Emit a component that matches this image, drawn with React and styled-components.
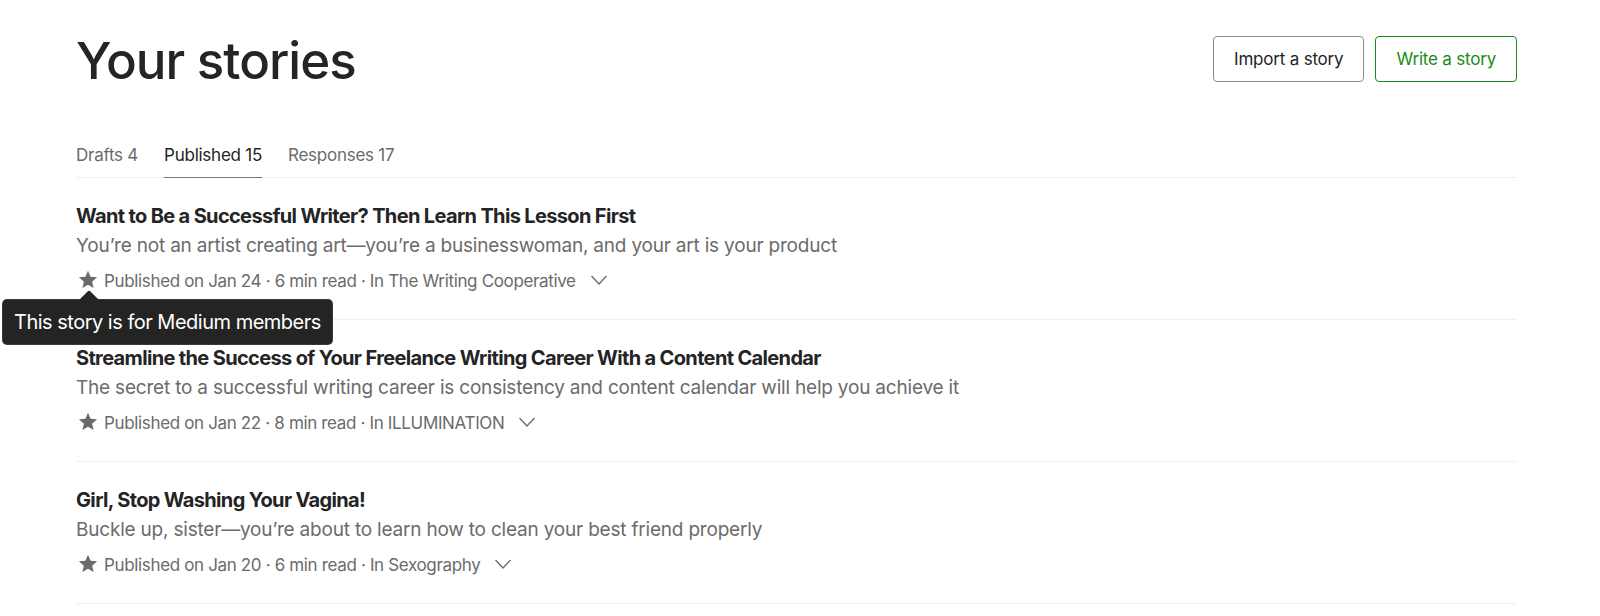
import React from "react";
import styled, { createGlobalStyle } from "styled-components";

const GlobalStyle = createGlobalStyle`
  * { box-sizing: border-box; }
  body {
    margin: 0;
    background: #fff;
    font-family: Inter, "Noto Sans", "Liberation Sans", sans-serif;
    color: #242424;
    -webkit-font-smoothing: antialiased;
  }
`;

const Page = styled.main`
  width: 1441px;
  margin-left: 76px;
  padding-top: 36px;
`;

const Header = styled.header`
  display: flex;
  justify-content: space-between;
  align-items: center;
  height: 46px;
`;

const PageTitle = styled.h1`
  margin: 0;
  font-size: 51px;
  line-height: 46px;
  font-weight: 500;
  letter-spacing: -1px;
  color: #242424;
  padding-top: 4px;
`;

const Actions = styled.div`
  display: flex;
  gap: 11px;
`;

const Button = styled.button`
  height: 46px;
  padding: 0 20px;
  border-radius: 4px;
  background: #fff;
  font-family: inherit;
  font-size: 17px;
  letter-spacing: -0.2px;
  border: 1px solid ${(p) => (p.$green ? "#1a8917" : "#8a8a8a")};
  color: ${(p) => (p.$green ? "#1a8917" : "#242424")};
  cursor: pointer;
`;

const Tabs = styled.nav`
  display: flex;
  gap: 26px;
  margin-top: 63px;
  border-bottom: 1px solid #f0f0f0;
`;

const Tab = styled.div`
  font-size: 17px;
  line-height: 20px;
  letter-spacing: -0.25px;
  padding-bottom: 12px;
  color: ${(p) => (p.$active ? "#242424" : "#6b6b6b")};
  border-bottom: 1px solid ${(p) => (p.$active ? "#757575" : "transparent")};
  margin-bottom: -1px;
`;

const StoryList = styled.section``;

const Story = styled.article`
  padding: 26px 0 26px;
  border-bottom: 1px solid #f0f0f0;
`;

const StoryTitle = styled.h2`
  margin: 0;
  font-size: 20px;
  line-height: 24px;
  font-weight: 700;
  letter-spacing: -0.65px;
  color: #242424;
`;

const Subtitle = styled.p`
  margin: 4px 0 0;
  font-size: 19px;
  line-height: 28px;
  letter-spacing: -0.2px;
  color: #6b6b6b;
`;

const Meta = styled.div`
  margin-top: 9px;
  display: flex;
  align-items: center;
  height: 24px;
  font-size: 17px;
  letter-spacing: -0.35px;
  color: #6b6b6b;
`;

const StarWrap = styled.span`
  position: relative;
  display: inline-flex;
  align-items: center;
  margin-left: 2px;
  margin-right: 6px;
  margin-top: -4px;
`;

const Tooltip = styled.div`
  position: absolute;
  top: 30px;
  left: -75px;
  width: 329px;
  height: 44px;
  background: #242424;
  color: #fff;
  border-radius: 4px;
  box-shadow: 0 0 0 1px #3a3a3a;
  font-size: 20px;
  letter-spacing: -0.5px;
  display: flex;
  align-items: center;
  padding-left: 11px;
  white-space: nowrap;
  z-index: 2;

  &::before {
    content: "";
    position: absolute;
    top: -7px;
    left: 79px;
    width: 14px;
    height: 14px;
    background: #242424;
    transform: rotate(45deg);
    border-radius: 2px;
  }
`;

const Chevron = styled.span`
  display: inline-flex;
  margin-left: 14px;
  margin-top: -3px;
`;

const Star = () => (
  <svg width="20" height="19" viewBox="0 0 24 23" fill="#6b6b6b">
    <path d="M12 1l3.1 7.2 7.9.7-6 5.2 1.8 7.7L12 17.8l-6.8 4 1.8-7.7-6-5.2 7.9-.7z" />
  </svg>
);

const ChevronIcon = () => (
  <svg width="18" height="12" viewBox="0 0 18 12" fill="none">
    <path d="M1.5 2l7.5 8 7.5-8" stroke="#6b6b6b" strokeWidth="1.3" />
  </svg>
);

const stories = [
  {
    title: "Want to Be a Successful Writer? Then Learn This Lesson First",
    subtitle:
      "You\u2019re not an artist creating art\u2014you\u2019re a businesswoman, and your art is your product",
    date: "Jan 24",
    read: "6 min read",
    pub: "The Writing Cooperative",
    tooltip: true,
  },
  {
    title:
      "Streamline the Success of Your Freelance Writing Career With a Content Calendar",
    subtitle:
      "The secret to a successful writing career is consistency and content calendar will help you achieve it",
    date: "Jan 22",
    read: "8 min read",
    pub: "ILLUMINATION",
  },
  {
    title: "Girl, Stop Washing Your Vagina!",
    subtitle:
      "Buckle up, sister\u2014you\u2019re about to learn how to clean your best friend properly",
    date: "Jan 20",
    read: "6 min read",
    pub: "Sexography",
  },
];

const App = () => (
  <>
    <GlobalStyle />
    <Page>
      <Header>
        <PageTitle>Your stories</PageTitle>
        <Actions>
          <Button>Import a story</Button>
          <Button $green>Write a story</Button>
        </Actions>
      </Header>
      <Tabs>
        <Tab>Drafts 4</Tab>
        <Tab $active>Published 15</Tab>
        <Tab>Responses 17</Tab>
      </Tabs>
      <StoryList>
        {stories.map((s) => (
          <Story key={s.title}>
            <StoryTitle>{s.title}</StoryTitle>
            <Subtitle>{s.subtitle}</Subtitle>
            <Meta>
              <StarWrap>
                <Star />
                {s.tooltip && <Tooltip>This story is for Medium members</Tooltip>}
              </StarWrap>
              Published on {s.date} · {s.read} · In {s.pub}
              <Chevron>
                <ChevronIcon />
              </Chevron>
            </Meta>
          </Story>
        ))}
      </StoryList>
    </Page>
  </>
);

export default App;
